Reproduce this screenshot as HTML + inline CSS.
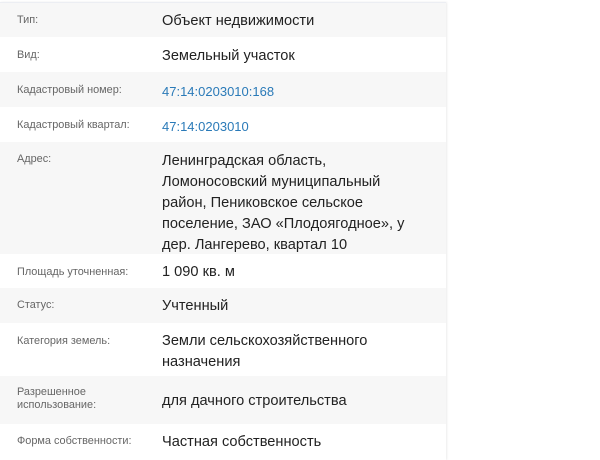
<!DOCTYPE html>
<html><head><meta charset="utf-8"><style>
body{margin:0;width:600px;height:458px;background:#fff;overflow:hidden;font-family:"Liberation Sans","Noto Sans CJK SC",sans-serif;}
.t{position:absolute;left:0;top:2px;width:446px;box-shadow:1px 0 2px rgba(0,0,0,0.08);border-top:1px solid #eceef3}
.r{position:relative;display:flex;align-items:flex-start;box-sizing:border-box}
.g{background:#f7f7f7}
.l{position:absolute;left:17px;font-size:10.9px;color:#666;line-height:13px}
.v{position:absolute;left:162px;font-size:14.6px;color:#222;line-height:21px;width:260px;margin-top:2px}
.a{color:#2a7ab8;font-size:13px;margin-top:1px}
</style></head><body>
<div class="t">
<div class="r g" style="height:34px"><div class="l" style="top:11px">Тип:</div><div class="v" style="top:6px">Объект недвижимости</div></div>
<div class="r" style="height:35px"><div class="l" style="top:12px">Вид:</div><div class="v" style="top:7px">Земельный участок</div></div>
<div class="r g" style="height:35px"><div class="l" style="top:12px">Кадастровый номер:</div><div class="v a" style="top:8px">47:14:0203010:168</div></div>
<div class="r" style="height:35px"><div class="l" style="top:12px">Кадастровый квартал:</div><div class="v a" style="top:8px">47:14:0203010</div></div>
<div class="r g" style="height:112px"><div class="l" style="top:11px">Адрес:</div><div class="v" style="top:7px;width:250px">Ленинградская область, Ломоносовский муниципальный район, Пениковское сельское поселение, ЗАО «Плодоягодное», у дер. Лангерево, квартал 10</div></div>
<div class="r" style="height:34px"><div class="l" style="top:12px">Площадь уточненная:</div><div class="v" style="top:6px">1 090 кв. м</div></div>
<div class="r g" style="height:35px"><div class="l" style="top:11px">Статус:</div><div class="v" style="top:6px">Учтенный</div></div>
<div class="r" style="height:53px"><div class="l" style="top:12px">Категория земель:</div><div class="v" style="top:6px;width:240px">Земли сельскохозяйственного назначения</div></div>
<div class="r g" style="height:48px"><div class="l" style="top:10px">Разрешенное<br>использование:</div><div class="v" style="top:13px">для дачного строительства</div></div>
<div class="r" style="height:36px"><div class="l" style="top:11px">Форма собственности:</div><div class="v" style="top:6px">Частная собственность</div></div>
</div>
</body></html>
